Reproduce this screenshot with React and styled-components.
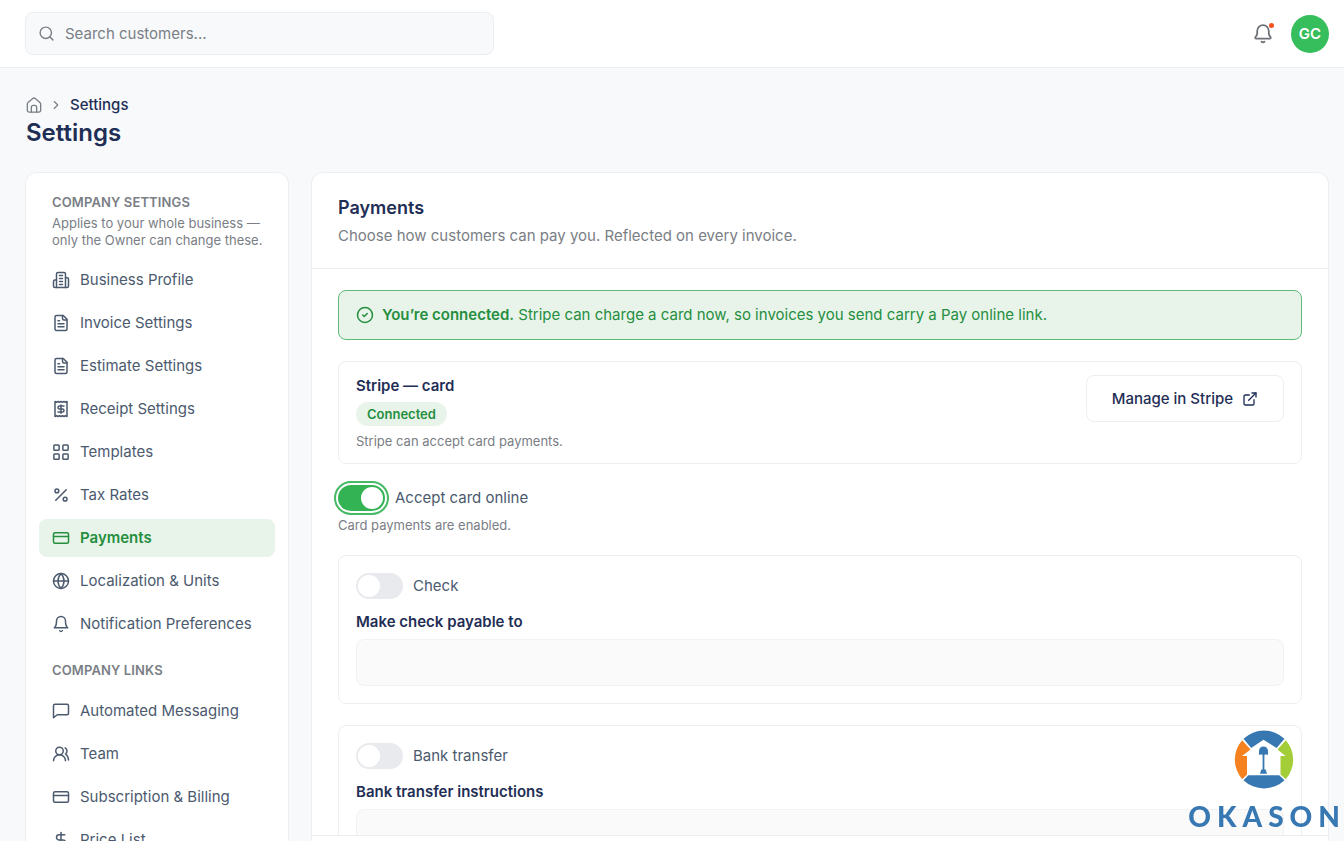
import React, { useState } from "react";
import styled, { createGlobalStyle } from "styled-components";
import {
  Search,
  ChevronRight,
  CircleCheck,
  ExternalLink,
  Percent,
  CreditCard,
  Globe,
  UsersRound,
  DollarSign,
} from "lucide-react";

const GlobalStyle = createGlobalStyle`
  * {
    box-sizing: border-box;
  }

  body {
    margin: 0;
    background: #f7f9fb;
    color: #4b5a6e;
    font-family: "Inter", "Liberation Sans", sans-serif;
    font-size: 15px;
    line-height: 22px;
    -webkit-font-smoothing: antialiased;
  }

  h1, h2, h3, p, ul {
    margin: 0;
    padding: 0;
  }

  button, input, textarea {
    font: inherit;
  }
`;

const Page = styled.div`
  height: 100vh;
  display: flex;
  flex-direction: column;
  overflow: hidden;
`;

const TopBar = styled.header`
  flex: none;
  display: flex;
  align-items: center;
  justify-content: space-between;
  padding: 12px 15px 12px 25px;
  background: #ffffff;
  border-bottom: 1px solid #eceef1;
`;

const SearchBox = styled.label`
  flex: 0 1 469px;
  height: 43px;
  display: flex;
  align-items: center;
  gap: 10px;
  padding: 0 12px;
  background: #f7f9fb;
  border: 1px solid #eceef1;
  border-radius: 8px;
  color: #7a7e85;

  > input {
    flex: 1;
    min-width: 0;
    padding: 0;
    border: none;
    outline: none;
    background: transparent;
    color: #1f2e55;
  }

  > input::placeholder {
    color: #7a7e85;
    opacity: 1;
  }
`;

const TopActions = styled.div`
  display: flex;
  align-items: center;
  gap: 16px;
`;

const BellBtn = styled.button`
  position: relative;
  display: flex;
  padding: 0;
  border: none;
  background: none;
  color: #6c7178;
  cursor: pointer;
`;

const Dot = styled.span`
  position: absolute;
  top: 1px;
  right: 1px;
  width: 5px;
  height: 5px;
  border-radius: 50%;
  background: #f4511e;
`;

const Avatar = styled.button`
  width: 38px;
  height: 38px;
  padding: 0;
  border: none;
  border-radius: 50%;
  background: #36bd5c;
  color: #ffffff;
  font-weight: 600;
  cursor: pointer;
`;

const Heading = styled.div`
  flex: none;
  padding: 26px 15px 22px 26px;
`;

const Breadcrumb = styled.nav`
  display: flex;
  align-items: center;
  gap: 7px;
  color: #7a7e85;
  font-weight: 500;

  > a {
    display: flex;
    color: inherit;
  }

  > span {
    color: #1f2e55;
  }
`;

const PageTitle = styled.h1`
  color: #1f2e55;
  font-size: 24px;
  font-weight: 600;
  line-height: 34px;
`;

const Columns = styled.div`
  flex: 1;
  min-height: 0;
  display: grid;
  grid-template-columns: 264px minmax(0, 1fr);
  gap: 22px;
  padding: 0 15px 0 25px;
`;

const Panel = styled.section`
  min-height: 0;
  display: flex;
  flex-direction: column;
  overflow: hidden;
  background: #ffffff;
  border: 1px solid #eceef1;
  border-bottom: none;
  border-radius: 12px 12px 0 0;
`;

const Sidebar = styled(Panel)`
  padding: 19px 13px 0;
  gap: 17px;
`;

const GroupTitle = styled.h2`
  padding: 0 13px;
  color: #7a7e85;
  font-size: 13px;
  font-weight: 600;
  line-height: 20px;
  letter-spacing: 0.01em;
  text-transform: uppercase;
`;

const GroupNote = styled.p`
  padding: 3px 0 0 13px;
  color: #7a7e85;
  font-size: 13px;
  line-height: 17px;
`;

const NavList = styled.ul`
  display: flex;
  flex-direction: column;
  gap: 5px;
  margin-top: 12px;
  list-style: none;
`;

const NavLink = styled.a`
  display: flex;
  align-items: center;
  gap: 10px;
  padding: 8px 13px;
  border-radius: 8px;
  background: ${(props) => (props.$active ? "#e8f4e9" : "transparent")};
  color: ${(props) => (props.$active ? "#258e3f" : "#4b5a6e")};
  font-weight: ${(props) => (props.$active ? 600 : 400)};
  text-decoration: none;
  white-space: nowrap;
`;

const PanelHeader = styled.div`
  flex: none;
  padding: 22px 26px 21px;
  border-bottom: 1px solid #eceef1;

  > h2 {
    color: #1f2e55;
    font-size: 18px;
    font-weight: 600;
    line-height: 26px;
  }

  > p {
    margin-top: 4px;
    color: #7a7e85;
  }
`;

const PanelBody = styled.div`
  flex: 1;
  min-height: 0;
  display: flex;
  flex-direction: column;
  gap: 21px;
  padding: 21px 26px 0;
  overflow: hidden;

  > * {
    flex: none;
  }
`;

const PanelFooter = styled.div`
  flex: none;
  height: 6px;
  border-top: 1px solid #eceef1;
`;

const Banner = styled.div`
  display: flex;
  align-items: center;
  gap: 8px;
  padding: 13px 17px;
  background: #e8f4e9;
  border: 1px solid #5dbd78;
  border-radius: 8px;
  color: #258e3f;

  strong {
    font-weight: 600;
  }
`;

const Card = styled.div`
  padding: ${(props) => (props.$compact ? "13px 17px" : "17px")};
  border: 1px solid #eceef1;
  border-radius: 8px;
`;

const SplitCard = styled(Card)`
  display: flex;
  align-items: flex-start;
  justify-content: space-between;
`;

const ProviderInfo = styled.div`
  display: flex;
  flex-direction: column;
  align-items: flex-start;
  gap: 6px;

  > h3 {
    color: #1f2e55;
    font-size: 15px;
    font-weight: 600;
    line-height: 21px;
  }
`;

const Badge = styled.span`
  padding: 2px 11px;
  border-radius: 12px;
  background: #e8f4e9;
  color: #258e3f;
  font-size: 13px;
  font-weight: 600;
  line-height: 20px;
`;

const Hint = styled.p`
  color: #7a7e85;
  font-size: 13px;
  line-height: 18px;
`;

const OutlineBtn = styled.button`
  height: 47px;
  display: flex;
  align-items: center;
  gap: 9px;
  padding: 0 25px;
  background: #ffffff;
  border: 1px solid #eceef1;
  border-radius: 8px;
  color: #1f2e55;
  font-weight: 500;
  cursor: pointer;
`;

const SwitchField = styled.div`
  display: flex;
  flex-direction: column;
  gap: 5px;
`;

const SwitchLabel = styled.label`
  display: flex;
  align-items: center;
  gap: 10px;
  cursor: pointer;
`;

const SwitchInput = styled.input`
  appearance: none;
  width: 47px;
  height: 26px;
  margin: 0;
  padding: 2px;
  display: flex;
  justify-content: flex-start;
  border-radius: 13px;
  background: #e9eaee;
  outline: ${(props) => (props.$ring ? "2px solid #45b964" : "none")};
  outline-offset: 2px;
  cursor: pointer;

  &::before {
    content: "";
    width: 22px;
    height: 22px;
    border-radius: 50%;
    background: #ffffff;
  }

  &:checked {
    justify-content: flex-end;
    background: #34b354;
  }
`;

const Field = styled.div`
  display: flex;
  flex-direction: column;
  gap: 6px;
  margin-top: 12px;

  > label {
    color: #1f2e55;
    font-weight: 600;
  }

  > input,
  > textarea {
    width: 100%;
    height: 47px;
    padding: 0 16px;
    background: #fafafa;
    border: 1px solid #f1f2f4;
    border-radius: 8px;
    color: #1f2e55;
    resize: none;
  }

  > textarea {
    height: 94px;
  }
`;

const Brand = styled.div`
  position: fixed;
  right: 4px;
  bottom: 9px;
  display: flex;
  flex-direction: column;
  align-items: flex-end;
  gap: 10px;
  pointer-events: none;

  > svg {
    margin-right: 46px;
  }

  > span {
    display: flex;
    gap: 6px;
    color: #3878b2;
    font-family: "Lato", sans-serif;
    font-size: 28px;
    line-height: 32px;
  }

  b {
    font-weight: 900;
  }
`;

function LineIcon({ size = 18, strokeWidth = 2, children }) {
  return (
    <svg
      width={size}
      height={size}
      viewBox="0 0 24 24"
      fill="none"
      stroke="currentColor"
      strokeWidth={strokeWidth}
      strokeLinecap="round"
      strokeLinejoin="round"
      aria-hidden="true"
    >
      {children}
    </svg>
  );
}

const HomeIcon = () => (
  <LineIcon size={16}>
    <path d="M2 10.4a3 3 0 0 1 1.1-2.3l7-5.9a3 3 0 0 1 3.8 0l7 5.9a3 3 0 0 1 1.1 2.3V20a2.6 2.6 0 0 1-2.6 2.6H4.6A2.6 2.6 0 0 1 2 20z" />
    <path d="M8 22.5V15.5a3 3 0 0 1 3-3h2a3 3 0 0 1 3 3v7" />
  </LineIcon>
);

const BuildingIcon = () => (
  <LineIcon>
    <path d="M6 22V4a2 2 0 0 1 2-2h8a2 2 0 0 1 2 2v18Z" />
    <path d="M6 12H4a2 2 0 0 0-2 2v6a2 2 0 0 0 2 2h2" />
    <path d="M18 9h2a2 2 0 0 1 2 2v9a2 2 0 0 1-2 2h-2" />
    <path d="M10 6h4M10 10h4M10 14h4M10 18h4" />
  </LineIcon>
);

const FileIcon = () => (
  <LineIcon>
    <path d="M15 2H6a2 2 0 0 0-2 2v16a2 2 0 0 0 2 2h12a2 2 0 0 0 2-2V7Z" />
    <path d="M14 2v4a2 2 0 0 0 2 2h4" />
    <path d="M10 9H8M16 13H8M16 17H8" />
  </LineIcon>
);

const ReceiptIcon = () => (
  <LineIcon>
    <path d="M4 2v20l2-1 2 1 2-1 2 1 2-1 2 1 2-1 2 1V2l-2 1-2-1-2 1-2-1-2 1-2-1-2 1Z" />
    <path d="M16 8h-6a2 2 0 1 0 0 4h4a2 2 0 1 1 0 4H8" />
    <path d="M12 17.5v-11" />
  </LineIcon>
);

const GridIcon = () => (
  <LineIcon>
    <rect x="2.5" y="2.500" width="7" height="7" rx="1" />
    <rect x="14.5" y="2.5" width="7" height="7" rx="1" />
    <rect x="14.5" y="14.5" width="7" height="7" rx="1" />
    <rect x="2.5" y="14.5" width="7" height="7" rx="1" />
  </LineIcon>
);

const BellIcon = () => (
  <LineIcon>
    <path d="M6 8a6 6 0 0 1 12 0c0 7 3 9 3 9H3s3-2 3-9" />
    <path d="M10.3 21a1.94 1.94 0 0 0 3.4 0" />
  </LineIcon>
);

const TopBellIcon = () => (
  <LineIcon size={24} strokeWidth={1.8}>
    <path d="M6.2 9a5.8 5.8 0 0 1 11.6 0v2.5c0 1.4.6 2.2 1.5 3.2.8 1 .6 1.9-.7 1.9H5.4c-1.3 0-1.5-.9-.7-1.9.9-1 1.5-1.8 1.5-3.2z" />
    <path d="M10.5 19.6c.8.9 2.2.9 3 0" />
  </LineIcon>
);

const MessageIcon = () => (
  <LineIcon>
    <path d="M22 15a2 2 0 0 1-2 2H7l-5 4V5a2 2 0 0 1 2-2h16a2 2 0 0 1 2 2z" />
  </LineIcon>
);

const settingsLinks = [
  { label: "Business Profile", icon: <BuildingIcon /> },
  { label: "Invoice Settings", icon: <FileIcon /> },
  { label: "Estimate Settings", icon: <FileIcon /> },
  { label: "Receipt Settings", icon: <ReceiptIcon /> },
  { label: "Templates", icon: <GridIcon /> },
  { label: "Tax Rates", icon: <Percent size={18} /> },
  { label: "Payments", icon: <CreditCard size={18} />, active: true },
  { label: "Localization & Units", icon: <Globe size={18} /> },
  { label: "Notification Preferences", icon: <BellIcon /> },
];

const companyLinks = [
  { label: "Automated Messaging", icon: <MessageIcon /> },
  { label: "Team", icon: <UsersRound size={18} /> },
  { label: "Subscription & Billing", icon: <CreditCard size={18} /> },
  { label: "Price List", icon: <DollarSign size={18} /> },
];

function NavItems({ items }) {
  return (
    <NavList>
      {items.map((itm) => (
        <li key={itm.label}>
          <NavLink
            href="#"
            $active={itm.active}
            aria-current={itm.active ? "page" : undefined}
          >
            {itm.icon}
            {itm.label}
          </NavLink>
        </li>
      ))}
    </NavList>
  );
}

function Switch({ label, defaultOn = false, ring }) {
  const [on, setOn] = useState(defaultOn);
  return (
    <SwitchLabel>
      <SwitchInput
        type="checkbox"
        role="switch"
        checked={on}
        onChange={() => setOn(!on)}
        $ring={ring}
      />
      {label}
    </SwitchLabel>
  );
}

function BrandLogo() {
  return (
    <svg width="60" height="60" viewBox="0 0 60 60" aria-hidden="true">
      <circle cx="30" cy="30" r="30" fill="#ffffff" />
      <path
        d="M9.5 8.8A29.5 29.5 0 0 1 50.5 8.8L42.6 18 29.5 9.8 17.2 18Z"
        fill="#3878b2"
      />
      <path
        d="M8.2 10.2A29.5 29.5 0 0 0 8.2 49.2L13 44.5V26H8L16.5 19.5Z"
        fill="#f5821f"
      />
      <path
        d="M51.8 10.2A29.5 29.5 0 0 1 51.8 49.2L46.5 44.5V26H51.5L43.5 19.5Z"
        fill="#a3ce38"
      />
      <path
        d="M9.5 50.2 14.3 45.3H45.2L50.5 50.2A29.5 29.5 0 0 1 9.5 50.2Z"
        fill="#3878b2"
      />
      <path
        d="M25 25V21c0-2.8 1.8-4.6 4.5-4.6S34 18.2 34 21v4l-2.2-.8-1.4.9V39.5h1.3l1.3 4.2h-7l1.3-4.2h1.3V25.1l-1.4-.9Z"
        fill="#3878b2"
      />
    </svg>
  );
}

function App() {
  return (
    <Page>
      <GlobalStyle />
      <TopBar>
        <SearchBox>
          <Search size={17} />
          <input
            type="search"
            placeholder="Search customers..."
            aria-label="Search customers"
          />
        </SearchBox>
        <TopActions>
          <BellBtn aria-label="Notifications">
            <TopBellIcon />
            <Dot />
          </BellBtn>
          <Avatar>GC</Avatar>
        </TopActions>
      </TopBar>
      <Heading>
        <Breadcrumb aria-label="Breadcrumb">
          <a href="#" aria-label="Home">
            <HomeIcon />
          </a>
          <ChevronRight size={14} />
          <span>Settings</span>
        </Breadcrumb>
        <PageTitle>Settings</PageTitle>
      </Heading>
      <Columns>
        <Sidebar as="nav" aria-label="Settings">
          <div>
            <GroupTitle>Company settings</GroupTitle>
            <GroupNote>
              Applies to your whole business — only the Owner can change these.
            </GroupNote>
            <NavItems items={settingsLinks} />
          </div>
          <div>
            <GroupTitle>Company links</GroupTitle>
            <NavItems items={companyLinks} />
          </div>
        </Sidebar>
        <Panel as="main">
          <PanelHeader>
            <h2>Payments</h2>
            <p>Choose how customers can pay you. Reflected on every invoice.</p>
          </PanelHeader>
          <PanelBody>
            <Banner role="status">
              <CircleCheck size={18} />
              <span>
                <strong>You’re connected.</strong> Stripe can charge a card now,
                so invoices you send carry a Pay online link.
              </span>
            </Banner>
            <SplitCard $compact>
              <ProviderInfo>
                <h3>Stripe — card</h3>
                <Badge>Connected</Badge>
                <Hint>Stripe can accept card payments.</Hint>
              </ProviderInfo>
              <OutlineBtn>
                Manage in Stripe
                <ExternalLink size={16} />
              </OutlineBtn>
            </SplitCard>
            <SwitchField>
              <Switch label="Accept card online" defaultOn ring />
              <Hint>Card payments are enabled.</Hint>
            </SwitchField>
            <Card>
              <Switch label="Check" />
              <Field>
                <label htmlFor="payable">Make check payable to</label>
                <input id="payable" type="text" />
              </Field>
            </Card>
            <Card>
              <Switch label="Bank transfer" />
              <Field>
                <label htmlFor="transfer">Bank transfer instructions</label>
                <textarea id="transfer" />
              </Field>
            </Card>
          </PanelBody>
          <PanelFooter />
        </Panel>
      </Columns>
      <Brand>
        <BrandLogo />
        <span aria-label="OKASON">
          {"OKASON".split("").map((letter, i) => (
            <b key={i}>{letter}</b>
          ))}
        </span>
      </Brand>
    </Page>
  );
}

export default App;
